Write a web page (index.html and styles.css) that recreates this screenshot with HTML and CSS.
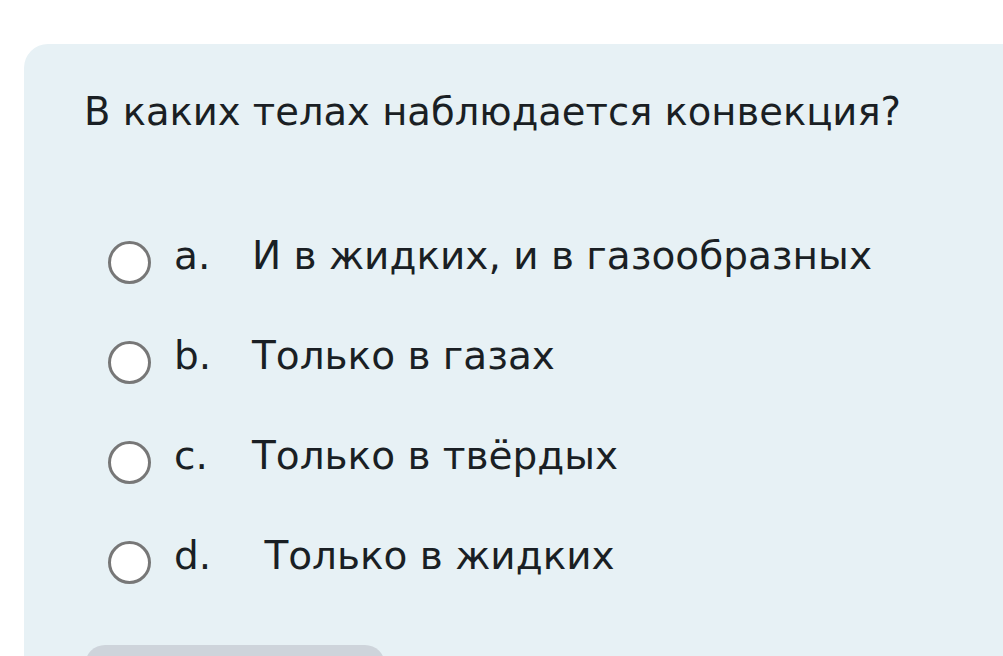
FILE: index.html
```html
<!DOCTYPE html>
<html lang="ru">
<head>
  <meta charset="UTF-8">
  <meta name="viewport" content="width=device-width, initial-scale=1.0">
  <title>Вопрос</title>
  <link rel="stylesheet" href="styles.css">
</head>
<body>
  <div class="question">
    <div class="qtext">В каких телах наблюдается конвекция?</div>
    <div class="answers">
      <label class="answer">
        <input type="radio" name="q1">
        <span class="letter">a.</span>
        <span class="text">И в жидких, и в газообразных</span>
      </label>
      <label class="answer">
        <input type="radio" name="q1">
        <span class="letter">b.</span>
        <span class="text">Только в газах</span>
      </label>
      <label class="answer">
        <input type="radio" name="q1">
        <span class="letter">c.</span>
        <span class="text">Только в твёрдых</span>
      </label>
      <label class="answer">
        <input type="radio" name="q1">
        <span class="letter">d.</span>
        <span class="text">&nbsp;Только в жидких</span>
      </label>
    </div>
    <button class="check" aria-label="Проверить"></button>
  </div>
</body>
</html>
```

FILE: styles.css
```css
* {
  margin: 0;
  padding: 0;
  box-sizing: border-box;
}

html, body {
  height: 100%;
  overflow: hidden;
  background-color: #fff;
}

body {
  font-family: "DejaVu Sans", "Noto Sans", sans-serif;
  color: #1a1f24;
  padding: 44px 0 0 24px;
}

.question {
  margin-right: -40px;
  background-color: #e7f1f5;
  border-radius: 24px 0 0 0;
  padding: 43px 60px 0 60px;
  min-height: 700px;
}

.qtext {
  font-size: 38.5px;
  line-height: 50px;
}

.answers {
  display: flex;
  flex-direction: column;
  gap: 50px;
  margin-top: 93px;
  padding-left: 24px;
}

.answer {
  display: flex;
  align-items: center;
  height: 50px;
  font-size: 39px;
}

/* the circle sits a little below the middle of the text line */
.answer input {
  appearance: none;
  flex: none;
  width: 43px;
  height: 43px;
  border: 3px solid #777;
  border-radius: 50%;
  background-color: #fff;
  margin: 14px 23px 0 0;
}

.letter {
  width: 78px;
}

.check {
  margin-top: 65px;
  margin-left: 1px;
  width: 300px;
  height: 60px;
  border: none;
  border-radius: 20px;
  background-color: #ced4db;
}
```
